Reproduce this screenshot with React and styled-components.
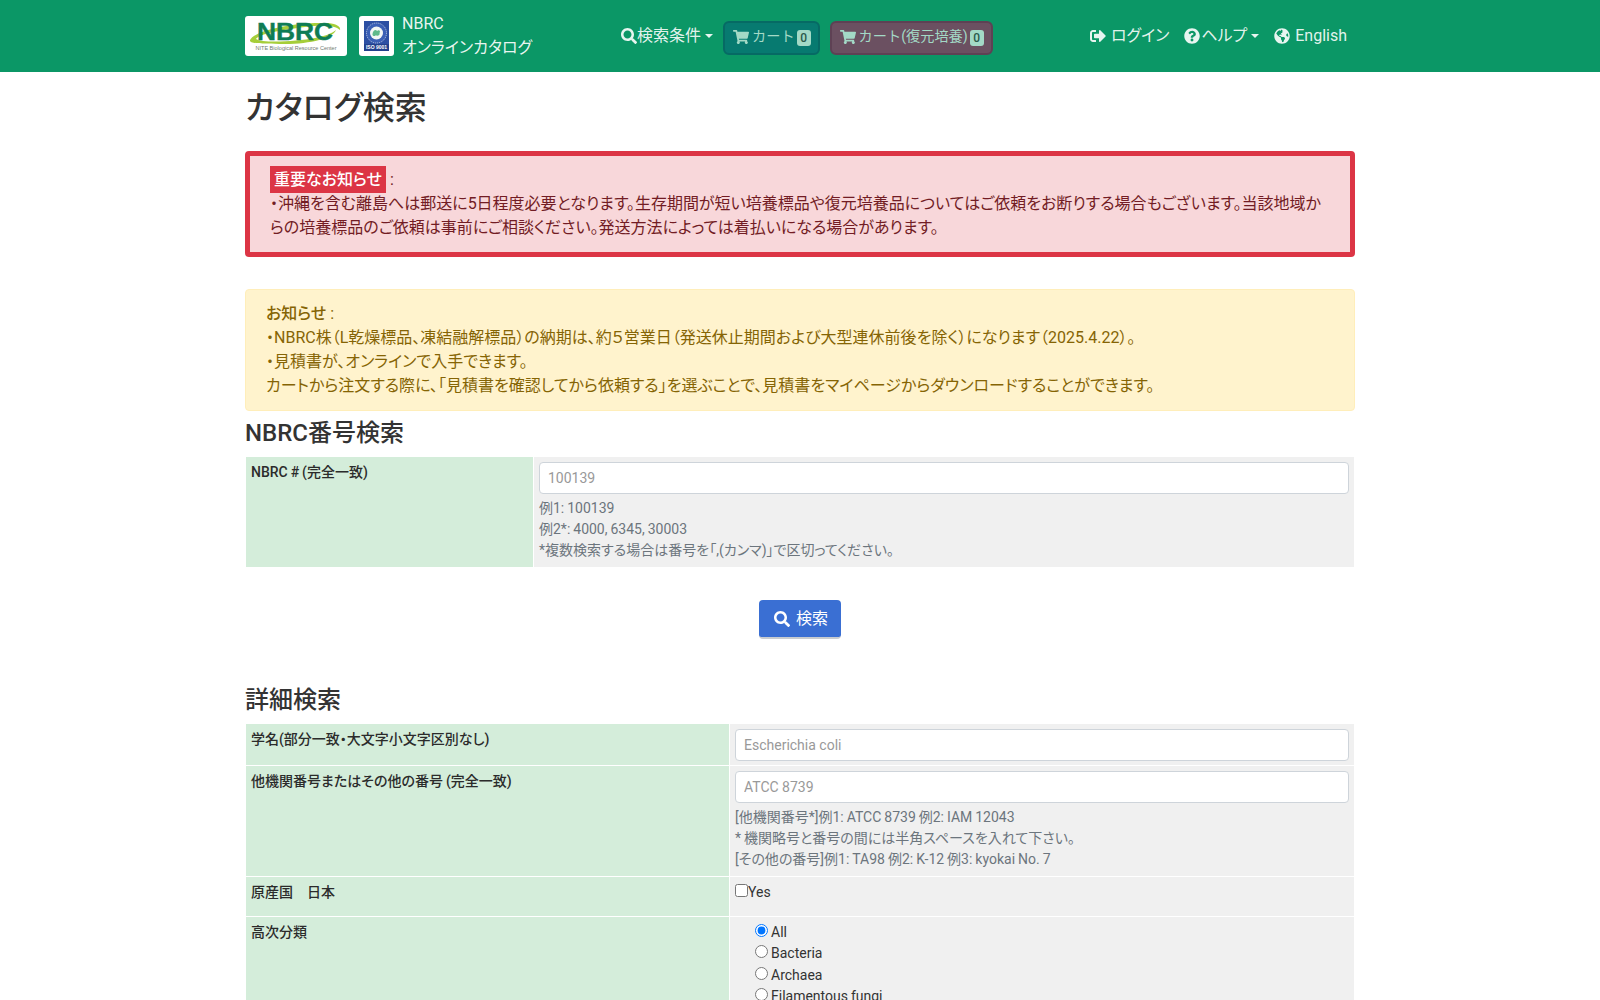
import React from "react";
import styled, { createGlobalStyle } from "styled-components";
import {
  FaSearch,
  FaShoppingCart,
  FaSignOutAlt,
  FaQuestionCircle,
  FaGlobeAmericas,
} from "react-icons/fa";

const GlobalStyle = createGlobalStyle`
  html, body { margin: 0; padding: 0; }
  body {
    background: #fff;
    color: #333;
    font-family: Roboto, "Noto Sans CJK JP", sans-serif;
    font-size: 16px;
    line-height: 1.5;
    font-feature-settings: "palt";
  }
  * { box-sizing: border-box; }
`;

const Navbar = styled.nav`
  height: 72px;
  background: #0b9766;
  display: flex;
  justify-content: center;
`;

const NavInner = styled.div`
  width: 1110px;
  display: flex;
  align-items: center;
`;

const Brand = styled.div`
  display: flex;
  align-items: center;
  gap: 12px;
  width: 376px;
  color: #fff;
`;

const LogoBox = styled.div`
  height: 40px;
  background: #fff;
  border-radius: 3px;
  display: flex;
  align-items: center;
  justify-content: center;
  width: ${(p) => p.$w}px;
`;

const BrandText = styled.div`
  margin-left: -4px;
  line-height: 24px;
  color: rgba(255, 255, 255, 0.92);
`;

const NavMid = styled.div`
  display: flex;
  align-items: center;
  gap: 10px;
  flex: 1;
`;

const NavLink = styled.a`
  color: rgba(255, 255, 255, 0.9);
  display: inline-flex;
  align-items: center;
  white-space: nowrap;
  svg { margin-right: ${(p) => p.$gap ?? 1}px; }
`;

const Caret = styled.span`
  display: inline-block;
  margin-left: 4px;
  border-top: 4.5px solid;
  border-left: 4.5px solid transparent;
  border-right: 4.5px solid transparent;
`;

const CartBtn = styled.a`
  display: inline-flex;
  align-items: center;
  height: 34px;
  margin-top: 4px;
  padding: 0 7px 2px 8px;
  border-radius: 6px;
  font-size: 14.2px;
  font-feature-settings: normal;
  color: #a3d9c6;
  background: ${(p) => p.$bg};
  border: 2px solid ${(p) => p.$line};
  svg { margin-right: 3px; }
`;

const Count = styled.span`
  margin: 2px 0 0 2px;
  background: #a3d9c6;
  color: #2a5a4b;
  font-size: 12px;
  font-weight: 500;
  line-height: 16px;
  width: 14px;
  height: 16px;
  text-align: center;
  border-radius: 3px;
`;

const NavRight = styled.div`
  display: flex;
  align-items: center;
  gap: 15px;
  padding-right: 8px;
`;

const Main = styled.main`
  width: 1110px;
  margin: 0 auto;
`;

const PageTitle = styled.h1`
  margin: 0;
  padding: 14px 0 20px;
  font-size: 32px;
  font-weight: 500;
  line-height: 45px;
  color: #333;
`;

const Alert = styled.div`
  border-radius: 4px;
  padding: 12px 20px;
  margin-bottom: 32px;
  line-height: 24px;
`;

const DangerAlert = styled(Alert)`
  border: 5px solid #dc3545;
  background: #f8d7da;
  color: #721c24;
`;

const WarnAlert = styled(Alert)`
  border: 1px solid #ffeeba;
  background: #fff3cd;
  color: #856404;
  margin-bottom: 4px;
  strong { font-weight: 500; }
`;

const Badge = styled.strong`
  background: #dc3545;
  color: #fff;
  font-weight: 500;
  padding: 4px;
`;

const SectionTitle = styled.h2`
  margin: 0;
  font-size: 24px;
  font-weight: 500;
  line-height: 36px;
  color: #333;
`;

const FormTable = styled.div`
  display: grid;
  grid-template-columns: ${(p) => p.$left}px 1fr;
  gap: 1px;
  padding: 1px;
  margin-top: 5px;
  font-size: 14px;
  line-height: 21px;
  word-spacing: -0.5px;
`;

const Label = styled.div`
  background: #d4edda;
  padding: 5px;
  font-weight: 500;
  color: #2b2b2b;
`;

const Field = styled.div`
  background: #f0f0f0;
  padding: 5px 5px 4px;
`;

const TextInput = styled.input`
  display: block;
  width: 100%;
  height: 32px;
  padding: 0 8px 1px;
  border: 1px solid #ced4da;
  border-radius: 4px;
  background: #fff;
  font: inherit;
  color: #495057;
  &::placeholder { color: #999; }
`;

const Help = styled.div`
  margin: 4px 0 2px;
  color: #6c757d;
`;

const SearchRow = styled.div`
  display: flex;
  justify-content: center;
  padding: 32px 0 43px;
`;

const SearchBtn = styled.button`
  display: inline-flex;
  align-items: center;
  gap: 6px;
  height: 39px;
  padding: 0 13px 0 15px;
  border: 0;
  border-bottom: 2px solid #c8ccd0;
  border-radius: 4px;
  background: #3a6fd3;
  color: #fff;
  font: inherit;
`;

const CheckLabel = styled.label`
  display: flex;
  align-items: flex-start;
  color: #333;
  margin-bottom: 9px;
  input { margin: 2px 0 0; width: 13px; height: 13px; }
`;

const RadioList = styled.div`
  padding-left: 20px;
  display: flex;
  flex-direction: column;
  label { margin-bottom: 0; line-height: 21.4px; }
  input { margin: 2px 3px 0 0; }
`;

const NbrcLogo = () => (
  <svg width="102" height="40" viewBox="0 0 102 40">
    <path d="M5 24 C10 14 50 6 80 7 C90 7 96 10 95 14 C90 9 76 9 60 11 C36 14 14 18 11 23 C16 27 50 26 70 22 C80 20 88 17 91 14 C88 22 66 28 40 28 C18 28 4 28 5 24 Z" fill="#a6ce39" />
    <text x="50" y="24" textAnchor="middle" fontFamily="Liberation Sans, sans-serif" fontWeight="700" fontSize="23" fill="#0e7c55" stroke="#0e7c55" strokeWidth="0.4" textLength="76" lengthAdjust="spacingAndGlyphs">NBRC</text>
    <text x="51" y="34" textAnchor="middle" fontFamily="Liberation Sans, sans-serif" fontSize="5.6" fill="#6f7a72" textLength="81" lengthAdjust="spacingAndGlyphs">NITE Biological Resource Center</text>
  </svg>
);

const IsoLogo = () => (
  <svg width="25" height="30" viewBox="0 0 25 30">
    <rect width="25" height="30" fill="#2c4fa3" />
    <circle cx="12.5" cy="12" r="10" fill="#3b5fb5" stroke="#dfe6f5" strokeWidth="0.7" strokeDasharray="1.2 0.8" />
    <circle cx="12.5" cy="12" r="6.5" fill="#f2f6f4" />
    <path d="M8.5 13 C9 9 12 8 13 10 C15 8 17 10 15.5 12 C16.5 14 13 16 12 14 C11 16 8 15 8.5 13 Z" fill="#5fb98a" />
    <rect y="23" width="25" height="7" fill="#22408c" />
    <text x="12.5" y="28.4" textAnchor="middle" fontFamily="Liberation Sans, sans-serif" fontSize="5" fontWeight="700" fill="#fff">ISO 9001</text>
  </svg>
);

export default function App() {
  return (
    <>
      <GlobalStyle />
      <Navbar>
        <NavInner>
          <Brand>
            <LogoBox $w={102}><NbrcLogo /></LogoBox>
            <LogoBox $w={35}><IsoLogo /></LogoBox>
            <BrandText>NBRC<br />オンラインカタログ</BrandText>
          </Brand>
          <NavMid>
            <NavLink $gap={0}><FaSearch size={16} />検索条件<Caret /></NavLink>
            <CartBtn $bg="#077a70" $line="#066a64"><FaShoppingCart size={16} />カート<Count>0</Count></CartBtn>
            <CartBtn $bg="#6b5061" $line="#5e4154"><FaShoppingCart size={16} />カート(復元培養)<Count>0</Count></CartBtn>
          </NavMid>
          <NavRight>
            <NavLink $gap={5}><FaSignOutAlt size={16} />ログイン</NavLink>
            <NavLink><FaQuestionCircle size={16} />ヘルプ<Caret /></NavLink>
            <NavLink $gap={5}><FaGlobeAmericas size={16} />English</NavLink>
          </NavRight>
        </NavInner>
      </Navbar>
      <Main>
        <PageTitle>カタログ検索</PageTitle>
        <DangerAlert>
          <Badge>重要なお知らせ</Badge> :<br />
          ・沖縄を含む離島へは郵送に5日程度必要となります。生存期間が短い培養標品や復元培養品についてはご依頼をお断りする場合もございます。当該地域からの培養標品のご依頼は事前にご相談ください。発送方法によっては着払いになる場合があります。
        </DangerAlert>
        <WarnAlert>
          <strong>お知らせ</strong> :<br />
          ・NBRC株（L乾燥標品、凍結融解標品）の納期は、約５営業日（発送休止期間および大型連休前後を除く）になります（2025.4.22）。<br />
          ・見積書が、オンラインで入手できます。<br />
          カートから注文する際に、「見積書を確認してから依頼する」を選ぶことで、見積書をマイページからダウンロードすることができます。
        </WarnAlert>
        <SectionTitle>NBRC番号検索</SectionTitle>
        <FormTable $left={287}>
          <Label>NBRC # (完全一致)</Label>
          <Field>
            <TextInput placeholder="100139" />
            <Help>例1: 100139<br />例2*: 4000, 6345, 30003<br />*複数検索する場合は番号を「,(カンマ)」で区切ってください。</Help>
          </Field>
        </FormTable>
        <SearchRow>
          <SearchBtn><FaSearch size={16} />検索</SearchBtn>
        </SearchRow>
        <SectionTitle>詳細検索</SectionTitle>
        <FormTable $left={483}>
          <Label>学名(部分一致・大文字小文字区別なし)</Label>
          <Field><TextInput placeholder="Escherichia coli" /></Field>
          <Label>他機関番号またはその他の番号 (完全一致)</Label>
          <Field>
            <TextInput placeholder="ATCC 8739" />
            <Help>[他機関番号*]例1: ATCC 8739 例2: IAM 12043<br />* 機関略号と番号の間には半角スペースを入れて下さい。<br />[その他の番号]例1: TA98 例2: K-12 例3: kyokai No. 7</Help>
          </Field>
          <Label>原産国　日本</Label>
          <Field><CheckLabel><input type="checkbox" />Yes</CheckLabel></Field>
          <Label>高次分類</Label>
          <Field>
            <RadioList>
              <CheckLabel><input type="radio" name="taxon" defaultChecked />All</CheckLabel>
              <CheckLabel><input type="radio" name="taxon" />Bacteria</CheckLabel>
              <CheckLabel><input type="radio" name="taxon" />Archaea</CheckLabel>
              <CheckLabel><input type="radio" name="taxon" />Filamentous fungi</CheckLabel>
              <CheckLabel><input type="radio" name="taxon" />Yeasts</CheckLabel>
            </RadioList>
          </Field>
        </FormTable>
      </Main>
    </>
  );
}
